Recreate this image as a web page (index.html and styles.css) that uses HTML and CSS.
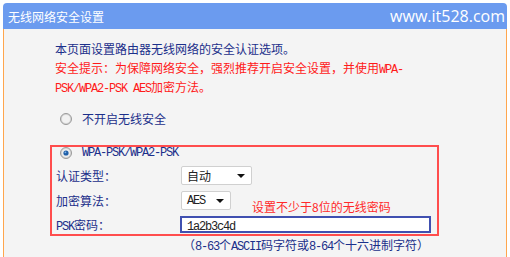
FILE: index.html
```html
<!DOCTYPE html>
<html lang="zh-CN">
<head>
    <meta charset="UTF-8">
    <meta name="viewport" content="width=device-width, initial-scale=1.0">
    <title>无线网络安全设置</title>
    <link rel="stylesheet" href="styles.css">
</head>
<body>
    <div class="panel">
        <div class="panel-head">
            <span class="title">无线网络安全设置</span>
            <span class="site">www.it528.com</span>
        </div>
        <div class="panel-body">
            <p class="intro">
                本页面设置路由器无线网络的安全认证选项。<br>
                <span class="warn">安全提示：为保障网络安全，强烈推荐开启安全设置，并使用<span class="mono">WPA-</span><br><span class="mono">PSK/WPA2-PSK AES</span>加密方法。</span>
            </p>

            <label class="opt">
                <svg class="radio" width="12" height="12" viewBox="0 0 12 12">
                    <circle cx="6" cy="6" r="5.5" fill="#d8d8d8" stroke="#9a9a9a"/>
                    <circle cx="6" cy="6" r="4" fill="#f2f2f2"/>
                </svg>
                不开启无线安全
            </label>

            <div class="wpa-box">
                <label class="opt opt-wpa">
                    <svg class="radio" width="12" height="12" viewBox="0 0 12 12">
                        <circle cx="6" cy="6" r="5.5" fill="#d8d8d8" stroke="#9a9a9a"/>
                        <circle cx="6" cy="6" r="4" fill="#eeeeee"/>
                        <circle cx="6" cy="6" r="2.6" fill="#1f5fa8"/>
                        <circle cx="5.4" cy="5.3" r="0.9" fill="#7fb4e8"/>
                    </svg>
                    <span class="mono">WPA-PSK/WPA2-PSK</span>
                </label>

                <div class="form">
                    <span class="lbl">认证类型：</span>
                    <div class="select sel-auth"><span>自动</span><i class="caret"></i></div>

                    <span class="lbl">加密算法：</span>
                    <div class="select sel-aes"><span class="mono">AES</span><i class="caret"></i></div>

                    <span class="lbl"><span class="mono">PSK</span>密码：</span>
                    <div class="input"><span class="mono">1a2b3c4d</span></div>
                </div>

                <!-- annotation added on top of the screenshot -->
                <span class="note">设置不少于8位的无线密码</span>
            </div>

            <p class="hint">（<span class="mono">8-63</span>个<span class="mono">ASCII</span>码字符或<span class="mono">8-64</span>个十六进制字符）</p>
        </div>
    </div>
</body>
</html>
```

FILE: styles.css
```css
body {
    margin: 0;
    background: #ffffff;
    font-family: "Noto Sans CJK SC", "Liberation Sans", sans-serif;
    font-size: 12px;
    color: #1b2f8a;
    overflow: hidden;
}
p {
    margin: 0;
}
.mono {
    font-family: "Liberation Mono", monospace;
    font-size: 12px;
    letter-spacing: -1.2px;
    line-height: 1;
}
.panel {
    margin: 3px 0 0 3px;
    width: 504px;
}
.panel-head {
    height: 26px;
    background-color: #6b9bef;
    border-radius: 4px 4px 0 0;
    display: flex;
    align-items: center;
    justify-content: space-between;
    padding: 0 2px 0 5px;
    color: #ffffff;
}
.title {
    font-size: 12px;
}
.site {
    font-family: "Open Sans", sans-serif;
    font-size: 16px;
}
.panel-body {
    border-left: 1px solid #ffa64d;
    border-right: 1px solid #ffa64d;
    background-color: #f4f4f4;
    padding: 10px 0 0 46px;
    height: 218px;
}
.intro {
    margin-left: 5px;
    line-height: 19px;
}
.warn {
    color: #ff1a1a;
}
.opt {
    display: flex;
    align-items: center;
    gap: 10px;
    height: 19px;
    margin: 13px 0 0 10px;
}
.wpa-box {
    position: relative;
    width: 381px;
    height: 87px;
    margin-top: 17px;
    border: 2px solid #ff4d4d;
    padding-left: 4px;
}
.opt-wpa {
    height: 12px;
    margin: 0 0 0 4px;
}
.form {
    display: grid;
    grid-template-columns: 125px auto;
    grid-template-rows: 19px 19px 17px;
    row-gap: 6px;
    align-items: center;
    justify-items: start;
    margin-top: 7px;
}
.lbl {
    line-height: 19px;
}
.select {
    display: flex;
    align-items: center;
    justify-content: space-between;
    box-sizing: border-box;
    height: 19px;
    padding: 0 6px 0 5px;
    background: #ffffff;
    border: 1px solid #d0d0d0;
    border-radius: 2px;
    color: #222222;
}
.sel-auth {
    width: 71px;
}
.sel-aes {
    width: 50px;
}
.caret {
    width: 0;
    height: 0;
    border-left: 4px solid transparent;
    border-right: 4px solid transparent;
    border-top: 4px solid #111111;
}
.input {
    box-sizing: border-box;
    width: 251px;
    height: 17px;
    margin-left: -1px;
    padding-left: 5px;
    background: #ffffff;
    border: 2px solid #4050b0;
    line-height: 13px;
    color: #222222;
}
.note {
    position: absolute;
    left: 200px;
    top: 53px;
    color: #ff2a2a;
    font-size: 12px;
    line-height: 14px;
}
.hint {
    margin: 2px 0 0 133px;
    line-height: 14px;
}
```
